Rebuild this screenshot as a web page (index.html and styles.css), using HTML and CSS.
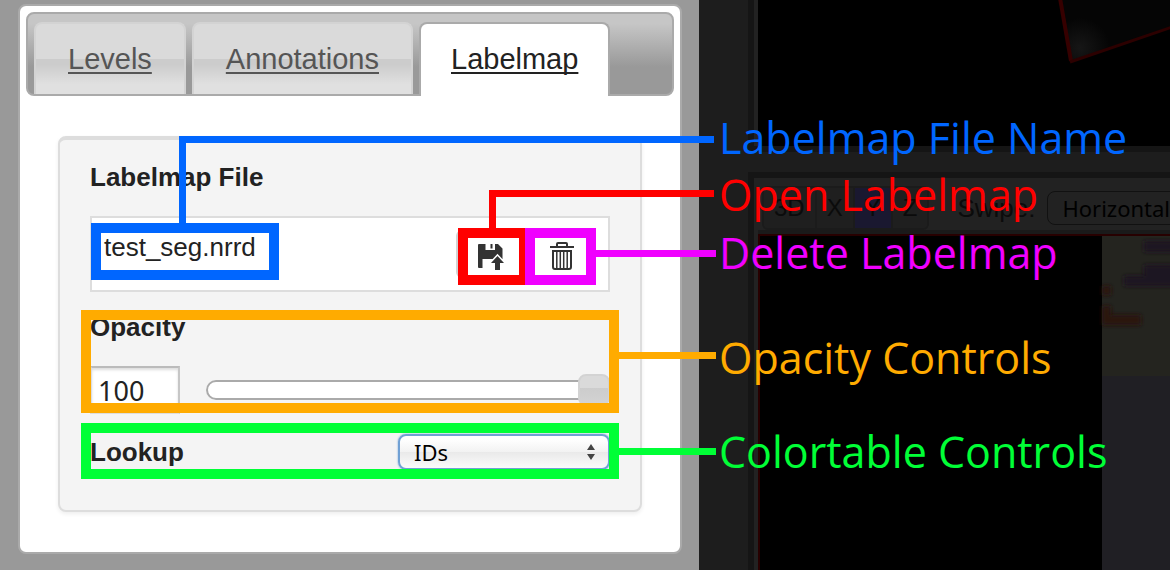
FILE: index.html
```html
<!DOCTYPE html>
<html lang="en">
<head>
<meta charset="utf-8">
<title>Labelmap controls</title>
<link rel="stylesheet" href="styles.css">
</head>
<body>
<div class="app">
  <aside class="sidebar">
    <div class="panel">
      <nav class="tabs">
        <a class="tab" href="#levels">Levels</a>
        <a class="tab" href="#annotations">Annotations</a>
        <a class="tab tab-active" href="#labelmap">Labelmap</a>
      </nav>
      <section class="card" id="labelmap">
        <h2 class="title">Labelmap File</h2>
        <div class="file-row">
          <span class="file-name">test_seg.nrrd</span>
          <div class="file-actions">
            <button class="icon-button" type="button" aria-label="Open labelmap">
              <svg class="icon" viewBox="0 0 28 32" aria-hidden="true">
                <path fill="#333" d="M2 6h6.500v6h9.500V6h3l4.500 4.500V21H5.500v9H2q-1 0-1-1V7q0-1 1-1zM13.500 6h2v4.500h-2z"/>
                <path fill="#333" stroke="#fff" stroke-width="3" paint-order="stroke" d="M20.500 18l6.500 7h-4v7h-5v-7h-4z"/>
              </svg>
            </button>
            <button class="icon-button" type="button" aria-label="Delete labelmap">
              <svg class="icon" viewBox="0 0 28 32" aria-hidden="true" fill="none" stroke="#333" stroke-width="2">
                <path d="M3 9h24M10 9V6q0-1 1-1h8q1 0 1 1v3M6 13h18v16q0 2-2 2H8q-2 0-2-2z"/>
                <path d="M9.800 13v17M13.300 13v17M16.700 13v17M20.200 13v17" stroke-width="1.500"/>
              </svg>
            </button>
          </div>
        </div>
        <label class="title opacity-title" for="opacity">Opacity</label>
        <div class="opacity-row">
          <input class="number" id="opacity" type="text" value="100">
          <input class="slider" type="range" min="0" max="100" value="100" aria-label="Opacity slider">
        </div>
        <div class="lookup-row">
          <label class="title" for="lookup">Lookup</label>
          <div class="select-wrap">
            <select class="select" id="lookup"><option>IDs</option></select>
            <svg class="select-arrows" viewBox="0 0 10 18" aria-hidden="true"><path fill="#444" d="M5 1l4 6H1zM1 11h8l-4 6z"/></svg>
          </div>
        </div>
      </section>
    </div>
  </aside>

  <main class="viewer">
    <div class="frame frame-top">
      <svg class="scene" aria-hidden="true">
        <defs>
          <radialGradient id="glow" gradientUnits="userSpaceOnUse" cx="322" cy="48" r="30">
            <stop offset="0" stop-color="#161616"/><stop offset="1" stop-color="#050505"/>
          </radialGradient>
        </defs>
        <path d="M302 -2L313 61L420 25V-2z" fill="url(#glow)"/>
        <path d="M302 -2L313 61" stroke="#360000" stroke-width="4"/>
        <path d="M312 62L420 25" stroke="#2c0000" stroke-width="3"/>
      </svg>
    </div>
    <div class="frame frame-slice">
      <div class="toolbar">
        <div class="axis-group">
          <button class="axis" type="button">3D</button>
          <button class="axis" type="button">X</button>
          <button class="axis axis-on" type="button">Y</button>
          <button class="axis" type="button">Z</button>
        </div>
        <label class="swipe-label" for="swipe">Swipe:</label>
        <select class="swipe-select" id="swipe"><option>Horizontal</option></select>
      </div>
      <div class="slice">
        <svg class="scene" aria-hidden="true">
          <defs><filter id="soft"><feGaussianBlur stdDeviation="2"/></filter></defs>
          <rect x="342" y="0" width="100%" height="140" fill="#24241f"/>
          <rect x="342" y="140" width="100%" height="100%" fill="#201f24"/>
          <g filter="url(#soft)">
            <path fill="#1d1923" d="M384 5h60v11h-60zM384 29h60v21h-80V40h20z"/>
            <path fill="#2a1210" d="M342 50h9v9h-9zM342 70h9v9h30v10h-39z"/>
          </g>
        </svg>
      </div>
    </div>
  </main>

  <div class="callouts">
    <svg class="callout-lines" aria-hidden="true">
      <g fill="none" stroke-width="10">
        <rect x="96" y="228" width="178" height="47" stroke="#06f"/>
        <rect x="463" y="233" width="61" height="47" stroke="#f00"/>
        <rect x="530" y="233" width="61" height="47" stroke="#f000ff"/>
        <rect x="86" y="315" width="528" height="93" stroke="#ffab00"/>
        <rect x="86" y="428" width="528" height="46" stroke="#00ff36"/>
      </g>
      <path fill="#06f" d="M179 223V136H714V143H186V223z"/>
      <path fill="#f00" d="M489 228V190H714V197H496V228z"/>
      <path fill="#f000ff" d="M596 250H716V257H596z"/>
      <path fill="#ffab00" d="M619 352H716V359H619z"/>
      <path fill="#00ff36" d="M619 448H716V455H619z"/>
    </svg>
    <span class="caption caption-file">Labelmap File Name</span>
    <span class="caption caption-open">Open Labelmap</span>
    <span class="caption caption-delete">Delete Labelmap</span>
    <span class="caption caption-opacity">Opacity Controls</span>
    <span class="caption caption-colors">Colortable Controls</span>
  </div>
</div>
</body>
</html>
```
FILE: styles.css
```css
* { box-sizing: border-box; }

body {
  margin: 0;
  font-family: "Liberation Sans", Arial, sans-serif;
  font-size: 26px;
  line-height: 30px;
  color: #222;
}

.app {
  position: relative;
  display: flex;
  min-height: 100vh;
  overflow: hidden;
  background: #1d1d1d;
}

/* Sidebar */
.sidebar {
  flex: none;
  width: 60%;
  max-width: 699px;
  padding: 4px 17px 16px 18px;
  background: #999;
}

.panel {
  padding: 6px;
  border: 2px solid #aaa;
  border-radius: 8px;
  background: #fff;
}

.tabs {
  display: flex;
  gap: 6px;
  padding: 8px 0 0 6px;
  border: 2px solid #aaa;
  border-radius: 8px;
  background: linear-gradient(#c6c6c6 12%, #999 66%);
}

.tab {
  padding: 20px 32px;
  border: 2px solid #d3d3d3;
  border-bottom: 0;
  border-radius: 8px 8px 0 0;
  background: linear-gradient(#dadada 50%, #ccc 50%, #ccc 58%, #e0e0e0 86%);
  color: #555;
  font-size: 29px;
  text-decoration: underline;
  text-decoration-thickness: 2px;
  text-underline-offset: 3px;
  text-decoration-skip-ink: none;
}

.tab-active {
  margin-bottom: -2px;
  padding: 20px 30px;
  border-color: #aaa;
  background: #fff;
  color: #222;
}

.card {
  margin: 40px 32px 34px;
  padding: 22px 30px 40px;
  border: 2px solid #ddd;
  border-top-width: 4px;
  border-radius: 8px;
  background: #f4f4f4;
  box-shadow: 0 2px 4px #eee;
}

.title {
  display: block;
  margin: 0;
  font-size: 26px;
  font-weight: bold;
}

.file-row {
  display: flex;
  align-items: center;
  justify-content: space-between;
  height: 76px;
  margin-top: 24px;
  padding: 0 12px;
  border: 2px solid #ddd;
  background: #fff;
}

.file-name { padding-bottom: 14px; }

.file-actions { display: flex; }

.icon-button {
  display: flex;
  align-items: center;
  justify-content: center;
  width: 70px;
  height: 48px;
  padding: 0;
  border: 2px solid #d3d3d3;
  border-radius: 6px;
  background: #fff;
}

.icon { width: 28px; height: 32px; }

.opacity-title { margin-top: 20px; }

.opacity-row {
  display: flex;
  align-items: center;
  gap: 26px;
  margin-top: 24px;
}

.number {
  width: 90px;
  height: 48px;
  padding: 0 6px;
  border: 2px solid #ddd;
  border-top: 2px solid #bbb;
  border-right-color: #c6c6c6;
  background: #fff;
  box-shadow: inset 0 2px 3px #ddd;
  color: #222;
  font: 27px "Noto Sans", sans-serif;
}

.slider {
  flex: 1;
  min-width: 0;
  height: 32px;
  margin: 0;
  appearance: none;
  background: none;
}

.slider::-webkit-slider-runnable-track {
  height: 20px;
  border-radius: 10px;
  background: #fff;
  box-shadow: inset 0 0 0 2px #aaa;
}

.slider::-webkit-slider-thumb {
  width: 32px;
  height: 32px;
  margin-top: -6px;
  appearance: none;
  border: 2px solid #d3d3d3;
  border-radius: 8px;
  background: linear-gradient(#dadada 43%, #ccc 43%, #d3d3d3);
}

.lookup-row {
  display: flex;
  align-items: center;
  justify-content: space-between;
  margin-top: 20px;
}

.select-wrap { position: relative; width: 212px; }

.select {
  display: block;
  width: 100%;
  height: 36px;
  padding: 0 14px;
  appearance: none;
  border: 2px solid #70a0d4;
  border-radius: 8px;
  background: linear-gradient(#fff 10%, #f2f2f2 50%, #e9e9e9 50%, #fbfbfb);
  box-shadow: 0 0 2px #70a0d4;
  color: #000;
  font: 22px "Noto Sans", sans-serif;
}

.select-arrows {
  position: absolute;
  top: 9px;
  right: 14px;
  width: 10px;
  height: 18px;
  pointer-events: none;
}

/* Image viewer, dimmed behind the captions */
.viewer {
  flex: 1;
  display: flex;
  flex-direction: column;
  gap: 20px;
  min-width: 0;
  padding-left: 49px;
}

.frame {
  border: 0 solid #151515;
  border-left-width: 6px;
}

.frame-top {
  height: 152px;
  padding-left: 4px;
  border-bottom-width: 6px;
  background: linear-gradient(90deg, #222 4px, #000 4px);
}

.frame-slice {
  flex: 1;
  display: flex;
  flex-direction: column;
  padding-left: 4px;
  border-top-width: 6px;
  background: #222;
}

.scene {
  display: block;
  width: 100%;
  height: 100%;
  overflow: hidden;
}

.toolbar {
  display: flex;
  align-items: center;
  height: 56px;
  padding: 8px 0 0 4px;
  border-bottom: 4px solid #1a1a1a;
  overflow: hidden;
}

.axis-group {
  flex: none;
  display: flex;
  border: 2px solid #1b1b1b;
  border-radius: 6px;
  overflow: hidden;
}

.axis {
  height: 40px;
  padding: 0 10px;
  border: 0;
  border-right: 2px solid #1b1b1b;
  background: #1f1f1f;
  color: #0b0b0b;
  font: 24px "Liberation Sans", Arial, sans-serif;
}

.axis:last-child { border-right: 0; }

.axis-on { background: #1a1830; }

.swipe-label {
  margin-left: 28px;
  color: #0b0b0b;
}

.swipe-select {
  flex: none;
  width: 180px;
  height: 34px;
  margin-left: 12px;
  padding: 0 14px;
  appearance: none;
  border: 1px solid #111;
  border-radius: 8px;
  background: #222;
  color: #000;
  font: 22px "Noto Sans", sans-serif;
}

.slice {
  flex: 1;
  min-height: 0;
  height: 0;
  border: solid #270000;
  border-width: 2px 0 0 2px;
  background: #000;
}

/* Callouts lie over both halves */
.callouts {
  position: absolute;
  inset: 0;
  pointer-events: none;
}

.callout-lines {
  position: absolute;
  width: 100%;
  height: 100%;
}

.caption {
  position: absolute;
  left: 719px;
  font: 43px/56px "Open Sans", sans-serif;
  white-space: nowrap;
}

.caption-file { top: 110px; color: #06f; }
.caption-open { top: 167px; color: #f00; }
.caption-delete { top: 225px; color: #f000ff; }
.caption-opacity { top: 330px; color: #ffab00; }
.caption-colors { top: 424px; color: #00ff36; }
```
